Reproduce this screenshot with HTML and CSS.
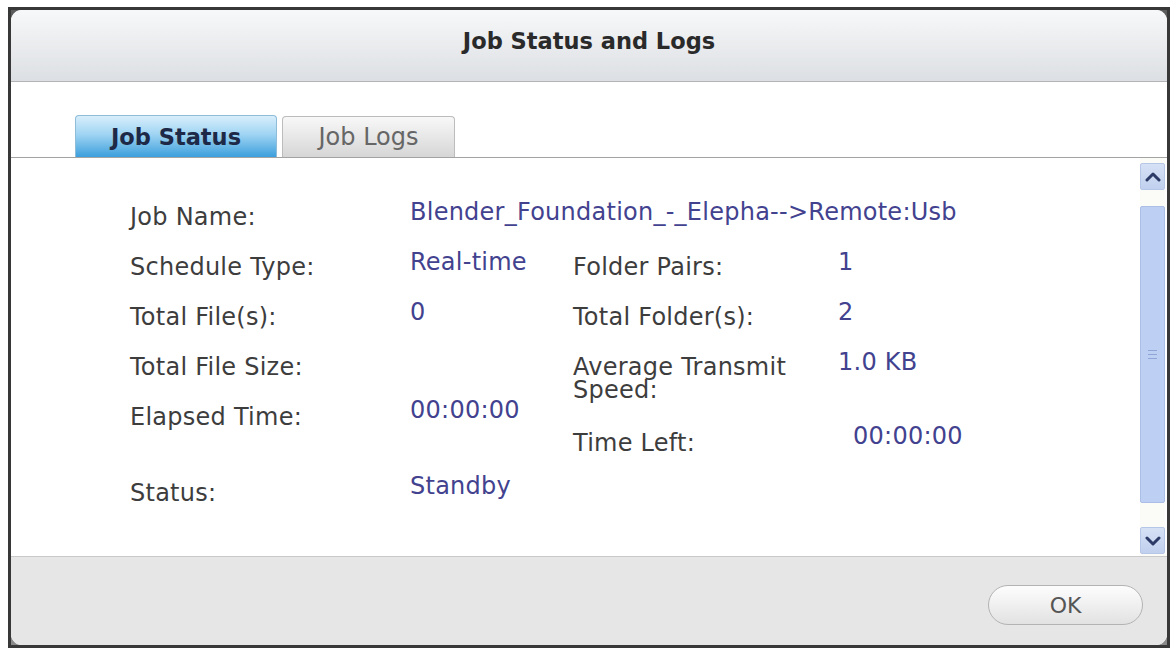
FILE: index.html
```html
<!DOCTYPE html>
<html lang="en">
  <head>
    <meta charset="UTF-8" />
    <meta name="viewport" content="width=device-width, initial-scale=1.0" />
    <title>Job Status and Logs</title>
    <link rel="stylesheet" href="styles.css">
  </head>
  <body>
    <div class="frame">
      <div class="dialog">
        <div class="titlebar">Job Status and Logs</div>

        <div class="tabbar">
          <div class="tab active">Job Status</div>
          <div class="tab">Job Logs</div>
        </div>

        <div class="content">
          <div class="info">
            <div class="row">
              <span class="label">Job Name:</span>
              <span class="value">Blender_Foundation_-_Elepha--&gt;Remote:Usb</span>
            </div>

            <div class="cols">
              <!-- left column -->
              <div class="col col-left">
                <div class="row">
                  <span class="label">Schedule Type:</span>
                  <span class="value">Real-time</span>
                </div>
                <div class="row">
                  <span class="label">Total File(s):</span>
                  <span class="value">0</span>
                </div>
                <div class="row">
                  <span class="label">Total File Size:</span>
                  <span class="value"></span>
                </div>
                <div class="row row-tall">
                  <span class="label">Elapsed Time:</span>
                  <span class="value value-up">00:00:00</span>
                </div>
                <div class="row">
                  <span class="label">Status:</span>
                  <span class="value value-up">Standby</span>
                </div>
              </div>

              <!-- right column -->
              <div class="col col-right">
                <div class="row">
                  <span class="label">Folder Pairs:</span>
                  <span class="value">1</span>
                </div>
                <div class="row">
                  <span class="label">Total Folder(s):</span>
                  <span class="value">2</span>
                </div>
                <div class="row row-tall">
                  <span class="label label-wrap">Average Transmit Speed:</span>
                  <span class="value">1.0 KB</span>
                </div>
                <div class="row">
                  <span class="label">Time Left:</span>
                  <span class="value value-up value-shift">00:00:00</span>
                </div>
              </div>
            </div>
          </div>

          <div class="scrollbar">
            <div class="sb-btn">
              <svg width="16" height="10" viewBox="0 0 16 10"><path d="M2 8 L8 2 L14 8" fill="none" stroke="#2b3a66" stroke-width="3" stroke-linecap="round" stroke-linejoin="round"/></svg>
            </div>
            <div class="sb-track">
              <div class="sb-thumb">
                <span class="grip"></span>
              </div>
            </div>
            <div class="sb-btn">
              <svg width="16" height="10" viewBox="0 0 16 10"><path d="M2 2 L8 8 L14 2" fill="none" stroke="#2b3a66" stroke-width="3" stroke-linecap="round" stroke-linejoin="round"/></svg>
            </div>
          </div>
        </div>

        <div class="footer">
          <button class="ok">OK</button>
        </div>
      </div>
    </div>
  </body>
</html>
```

FILE: styles.css
```css
* {
  margin: 0;
  padding: 0;
  box-sizing: border-box;
}

body {
  background: #ffffff;
  font-family: "DejaVu Sans", Verdana, sans-serif;
  font-size: 24px;
  letter-spacing: 0.25px;
  color: #3d3d3d;
  overflow: hidden;
}

/* outer dark frame */
.frame {
  margin: 7px 6px 6px 8px;
  height: 641px;
  border: 3px solid #383838;
  background: linear-gradient(#5c5c5c, #8a8a8a);
}

.dialog {
  height: 100%;
  display: flex;
  flex-direction: column;
  border-radius: 11px;
  overflow: hidden;
  background: #ffffff;
}

/* title */
.titlebar {
  height: 72px;
  padding-top: 18px;
  text-align: center;
  font-weight: bold;
  font-size: 22.5px;
  letter-spacing: 0;
  color: #2a2a2a;
  background: linear-gradient(#f7f8f9, #dcdfe3);
  border-bottom: 1px solid #b3b3b3;
}

/* tabs */
.tabbar {
  height: 76px;
  display: flex;
  align-items: flex-end;
  gap: 5px;
  padding-left: 64px;
  border-bottom: 1px solid #a3a3a3;
}

.tab {
  height: 41px;
  width: 173px;
  display: flex;
  justify-content: center;
  align-items: center;
  border: 1px solid #bcbcbc;
  border-bottom: none;
  border-radius: 4px 4px 0 0;
  background: linear-gradient(#f8f8f8, #d6d6d6);
  color: #666666;
  font-size: 24px;
  letter-spacing: 0;
}

.tab.active {
  width: 202px;
  height: 42px;
  border-color: #8fbcd8;
  background: linear-gradient(#d8eefb 0%, #9fd4f3 45%, #3c9fdc 100%);
  color: #1d2947;
  font-weight: bold;
  font-size: 22.5px;
}

/* content */
.content {
  flex: 1;
  display: flex;
}

.info {
  flex: 1;
  padding: 34px 0 0 119px;
}

.cols {
  display: flex;
}

.row {
  display: flex;
  align-items: flex-start;
  min-height: 50px;
  line-height: 24px;
}

.row-tall {
  min-height: 76px;
}

.label {
  padding-top: 13px;
  white-space: nowrap;
}

.col-left .label,
.info > .row .label {
  width: 280px;
}

.col-left {
  width: 443px;
}

.col-right .label {
  width: 265px;
}

.label-wrap {
  white-space: normal;
  line-height: 23px;
  padding-top: 14px;
}

.value {
  padding-top: 8px;
  color: #42428f;
  white-space: nowrap;
}

.value-up {
  padding-top: 6px;
}

.value-shift {
  padding-left: 15px;
}

/* scrollbar */
.scrollbar {
  width: 25px;
  margin-right: 2px;
  padding: 5px 0 2px;
  display: flex;
  flex-direction: column;
  background: #fbfbf7;
}

.sb-btn {
  height: 27px;
  display: flex;
  justify-content: center;
  align-items: center;
  background: linear-gradient(#d6e1f5, #c0d0ee);
  border: 1px solid #b6c6e6;
  border-radius: 2px;
}

.sb-track {
  flex: 1;
  padding: 16px 0 24px;
}

.sb-thumb {
  height: 100%;
  display: flex;
  justify-content: center;
  align-items: center;
  background: #bdd0f3;
  border: 1px solid #aabee6;
  border-radius: 2px;
}

.grip {
  width: 9px;
  height: 9px;
  border-top: 1px solid #8ea5d6;
  border-bottom: 1px solid #8ea5d6;
  background: linear-gradient(#8ea5d6, #8ea5d6) center / 100% 1px no-repeat;
}

/* footer */
.footer {
  height: 89px;
  display: flex;
  justify-content: flex-end;
  align-items: flex-start;
  padding: 28px 24px 0 0;
  background: #e6e6e6;
  border-top: 1px solid #c9c9c9;
}

.ok {
  width: 155px;
  height: 40px;
  border: 1px solid #b3b3b3;
  border-radius: 20px;
  background: linear-gradient(#fdfdfd, #e2e2e2);
  color: #555555;
  font-family: "DejaVu Sans", Verdana, sans-serif;
  font-size: 22px;
  cursor: pointer;
}
```
